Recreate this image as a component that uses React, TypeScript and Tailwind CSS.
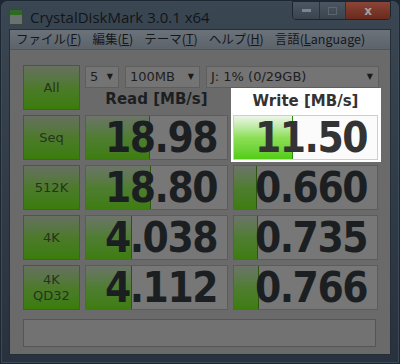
import React from "react";

const rows = [
  { label: "Seq", read: "18.98", readFill: 64, write: "11.50", writeFill: 59 },
  { label: "512K", read: "18.80", readFill: 65, write: "0.660", writeFill: 23 },
  { label: "4K", read: "4.038", readFill: 46, write: "0.735", writeFill: 24 },
  { label: "4K QD32", read: "4.112", readFill: 46, write: "0.766", writeFill: 25 },
];

function TestButton({ children }: { children: React.ReactNode }) {
  return (
    <div className="h-[45px] w-[57px] flex flex-col items-center justify-center border border-[#4c5648] bg-gradient-to-b from-[#66705f] via-[#4d7a2a] to-[#3a7d08] text-[13px] leading-[16px] text-[#253320] [font-family:'DejaVu_Sans',sans-serif]">
      {children}
    </div>
  );
}

function ResultCell({ value, fill, lit }: { value: string; fill: number; lit?: boolean }) {
  return (
    <div
      className={`relative h-[45px] border ${
        lit ? "border-[#cfcfcf] bg-[#fbfbfb]" : "border-[#5c5c5c] bg-[#777777]"
      }`}
    >
      <div
        className={`absolute left-0 top-0 bottom-0 border-r ${
          lit
            ? "bg-gradient-to-b from-[#eef5ea] via-[#8ddf55] to-[#52cc10] border-[#2e8a10]"
            : "bg-gradient-to-b from-[#6c7468] via-[#4f7d30] to-[#3e7d0e] border-[#2c5510]"
        }`}
        style={{ width: fill }}
      />
      <div
        className={`relative h-full flex items-center justify-end pr-[10px] text-[42px] font-bold tracking-[-1.5px] leading-[43px] whitespace-nowrap [font-family:'DejaVu_Sans_Condensed','DejaVu_Sans',sans-serif] [font-stretch:condensed] ${
          lit ? "text-[#333333]" : "text-[#1c1f22]"
        }`}
      >
        {value}
      </div>
    </div>
  );
}

function Select({ text, w }: { text: string; w: string }) {
  return (
    <div className={`${w} h-[22px] flex items-center justify-between pl-[4px] pr-[5px] border border-[#5e5e5e] bg-[#747474] text-[13px] text-[#1e1e1e] whitespace-nowrap [font-family:'DejaVu_Sans',sans-serif]`}>
      <span>{text}</span>
      <span className="text-[8px] text-[#1a1a1a]">▼</span>
    </div>
  );
}

export default function App() {
  return (
    <div className="w-[400px] h-[364px] bg-[#1c2733] p-[1px] overflow-hidden">
      <div className="h-full flex flex-col rounded-t-[6px] bg-gradient-to-b from-[#3a4652] to-[#27323e] border border-[#3d4956] px-[7px] pb-[7px]">
        {/* Title bar */}
        <div className="h-[27px] flex items-start justify-between">
          <div className="flex items-center gap-[7px] pt-[4px]">
            <div className="w-[14px] h-[16px] flex flex-col border border-[#3b4440]">
              <div className="h-[5px] bg-[#2e6a22]" />
              <div className="flex-1 bg-[#6a7270]" />
            </div>
            <span className="text-[15px] text-[#121518] whitespace-nowrap [font-family:'Open_Sans',sans-serif]">CrystalDiskMark 3.0.1 x64</span>
          </div>
          <div className="flex -mt-[1px] h-[19px] border border-[#1d2630] rounded-b-[4px] overflow-hidden">
            <div className="w-[27px] flex items-center justify-center bg-gradient-to-b from-[#4c5662] to-[#3a444f] border-r border-[#2a333c]">
              <div className="w-[9px] h-[3px] bg-[#7b838b]" />
            </div>
            <div className="w-[26px] flex items-center justify-center bg-gradient-to-b from-[#4c5662] to-[#3a444f] border-r border-[#2a333c]">
              <div className="w-[9px] h-[8px] border border-[#5d666f]" />
            </div>
            <div className="w-[44px] flex items-center justify-center bg-gradient-to-b from-[#8a4536] to-[#6b2a1c] text-[12px] font-bold text-[#a0a0a0] [font-family:'DejaVu_Sans',sans-serif]">
              x
            </div>
          </div>
        </div>

        {/* Client */}
        <div className="flex-1 flex flex-col border border-[#242e38]">
          <div className="h-[20px] flex items-center gap-[11px] px-[6px] bg-gradient-to-b from-[#6b727a] to-[#5c636b] border-b border-[#4e555c] text-[12.5px] leading-none whitespace-nowrap text-[#15181b] [font-family:'Noto_Sans_CJK_JP',sans-serif]">
            <span>ファイル(<span className="underline">F</span>)</span>
            <span>編集(<span className="underline">E</span>)</span>
            <span>テーマ(<span className="underline">T</span>)</span>
            <span>ヘルプ(<span className="underline">H</span>)</span>
            <span>言語(<span className="underline">L</span>anguage)</span>
          </div>

          <div className="flex-1 bg-[#6a6a6a] pl-[13px] pr-[14px] pt-[15px]">
            <div className="flex gap-[5px]">
              <div className="flex flex-col gap-[5px]">
                <TestButton>All</TestButton>
                {rows.map((r) => (
                  <TestButton key={r.label}>
                    {r.label === "4K QD32" ? (
                      <>
                        <span>4K</span>
                        <span>QD32</span>
                      </>
                    ) : (
                      r.label
                    )}
                  </TestButton>
                ))}
              </div>

              <div className="flex-1 flex flex-col">
                <div className="flex gap-[6px] pt-[1px]">
                  <Select text="5" w="w-[34px]" />
                  <Select text="100MB" w="w-[75px]" />
                  <Select text="J: 1% (0/29GB)" w="w-[173px]" />
                </div>
                <div className="flex gap-[5px]">
                  <div className="w-[143px] flex flex-col gap-[5px]">
                    <div className="h-[22px] flex items-center justify-center text-[15px] font-bold text-[#1c1f22] whitespace-nowrap [font-family:'DejaVu_Sans',sans-serif]">
                      Read [MB/s]
                    </div>
                    {rows.map((r) => (
                      <ResultCell key={r.label} value={r.read} fill={r.readFill} />
                    ))}
                  </div>
                  <div className="w-[145px] flex flex-col gap-[3px]">
                    <div className="-ml-[2px] -mr-[3px] pl-[2px] pr-[3px] pb-[2px] bg-white flex flex-col gap-[3px]">
                      <div className="h-[24px] flex items-end justify-center text-[15px] font-bold text-[#333333] whitespace-nowrap [font-family:'DejaVu_Sans',sans-serif]">
                        Write [MB/s]
                      </div>
                      <ResultCell value={rows[0].write} fill={rows[0].writeFill} lit />
                    </div>
                    {rows.slice(1).map((r, i) => (
                      <div key={r.label} className={i === 0 ? "" : "mt-[2px]"}>
                        <ResultCell value={r.write} fill={r.writeFill} />
                      </div>
                    ))}
                  </div>
                </div>
              </div>
            </div>

            <div className="mt-[9px] h-[28px] border border-[#555555] bg-[#727272]" />
          </div>
        </div>
      </div>
    </div>
  );
}
